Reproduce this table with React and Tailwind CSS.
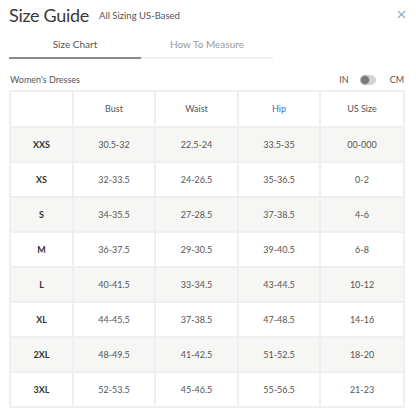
import React from "react";

const rows = [
  ["XXS", "30.5-32", "22.5-24", "33.5-35", "00-000"],
  ["XS", "32-33.5", "24-26.5", "35-36.5", "0-2"],
  ["S", "34-35.5", "27-28.5", "37-38.5", "4-6"],
  ["M", "36-37.5", "29-30.5", "39-40.5", "6-8"],
  ["L", "40-41.5", "33-34.5", "43-44.5", "10-12"],
  ["XL", "44-45.5", "37-38.5", "47-48.5", "14-16"],
  ["2XL", "48-49.5", "41-42.5", "51-52.5", "18-20"],
  ["3XL", "52-53.5", "45-46.5", "55-56.5", "21-23"],
];

const cols = "grid grid-cols-[61px_80px_81px_80px_82px] gap-[2px]";

export default function App() {
  return (
    <div className="w-[416px] h-[415px] bg-white text-[#444] font-['Lato','Liberation_Sans',sans-serif] overflow-hidden">
      {/* header */}
      <div className="flex items-end pl-[9px] pr-[10px] pt-[3px] h-[26px]">
        <h1 className="text-[18px] leading-[22px] text-[#3a3a3a] tracking-[-0.3px]">Size Guide</h1>
        <span className="ml-[10px] mb-[4px] text-[9.5px] leading-[12px] text-[#555]">All Sizing US-Based</span>
        <button className="ml-auto mb-[7px] text-[#8fa9c6]">
          <svg width="9" height="9" viewBox="0 0 9 9" fill="none" stroke="currentColor" strokeWidth="1.1">
            <path d="M1 1L8 8M8 1L1 8" />
          </svg>
        </button>
      </div>

      {/* tabs */}
      <div className="flex ml-[9px] mt-[12px] w-[264px]">
        <div className="w-[132px] text-center text-[10px] leading-[12px] text-[#555] pb-[7px] border-b-2 border-[#8a8a8a]">Size Chart</div>
        <div className="w-[132px] text-center text-[10px] leading-[12px] text-[#999] pb-[7px] border-b-2 border-[#f0f0f0]">How To Measure</div>
      </div>

      {/* unit row */}
      <div className="flex items-center pl-[10px] pr-[12px] mt-[15px] h-[12px]">
        <span className="text-[9px] text-[#555]">Women's Dresses</span>
        <span className="ml-auto text-[9px] text-[#555]">IN</span>
        <span className="ml-[11px] w-[16px] h-[10px] rounded-full bg-[#d4d4d4] relative">
          <span className="absolute left-0 top-0 w-[10px] h-[10px] rounded-full bg-[#7a7a7a] border border-[#bbb]" />
        </span>
        <span className="ml-[14px] text-[9px] text-[#555]">CM</span>
      </div>

      {/* table */}
      <div className="ml-[9px] mt-[4px] w-[396px] bg-[#efefef] p-[2px] flex flex-col gap-[2px] text-[9px]">
        <div className={cols}>
          <div className="h-[34px] bg-white" />
          <div className="h-[34px] bg-white flex items-center justify-center text-[#555]">Bust</div>
          <div className="h-[34px] bg-white flex items-center justify-center text-[#555]">Waist</div>
          <div className="h-[34px] bg-white flex items-center justify-center text-[#3f6fb5]">Hip</div>
          <div className="h-[34px] bg-white flex items-center justify-center text-[#555]">US Size</div>
        </div>
        {rows.map((r, i) => (
          <div key={r[0]} className={cols}>
            {r.map((c, j) => (
              <div
                key={j}
                className={`h-[33px] flex items-center justify-center ${i % 2 === 0 ? "bg-[#f6f6f4]" : "bg-white"} ${j === 0 ? "font-bold text-[#333]" : "text-[#555]"}`}
              >
                {c}
              </div>
            ))}
          </div>
        ))}
      </div>
    </div>
  );
}
